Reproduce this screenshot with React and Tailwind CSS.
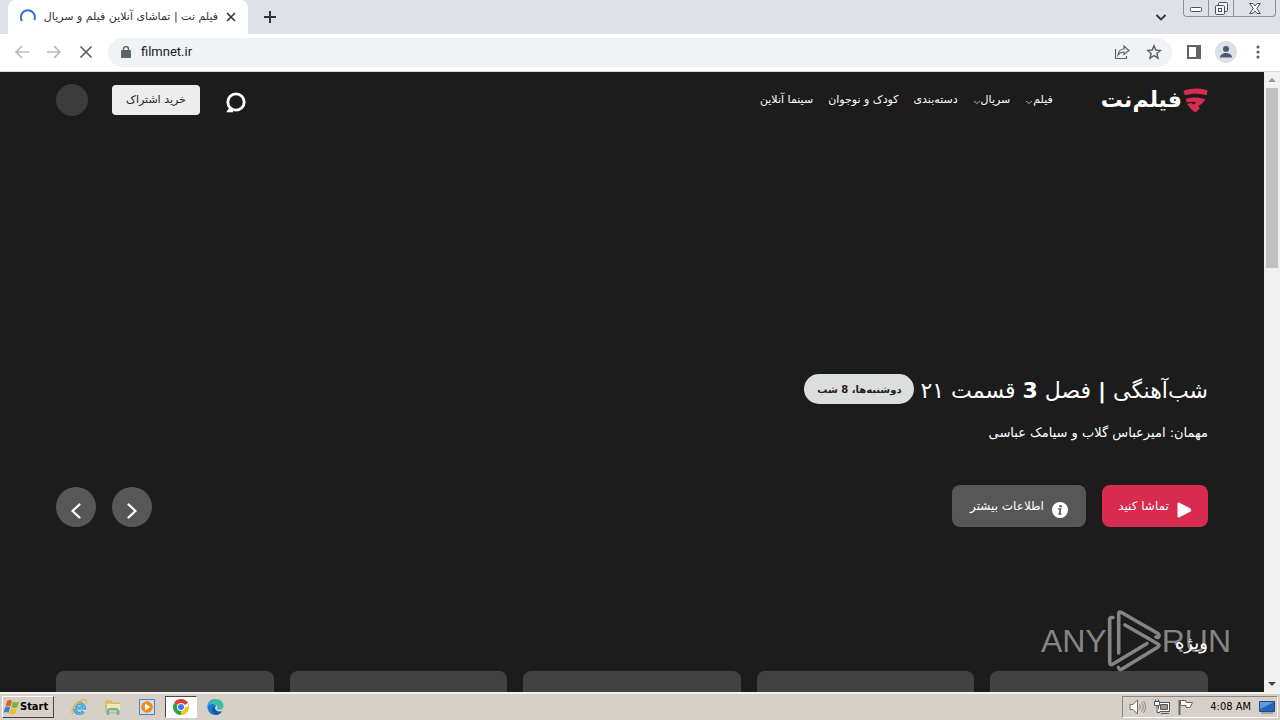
import React from "react";

const fa = "font-['DejaVu_Sans',sans-serif]";

function TabStrip() {
  return (
    <div className="flex h-[34px] shrink-0 bg-[#dee1e8]">
      <div className="ml-2 flex w-[240px] items-center gap-2 rounded-t-lg bg-white px-3">
        <svg className="size-4 shrink-0" viewBox="0 0 16 16" fill="none" stroke="#2f74cf" strokeWidth="2">
          <path d="M2 12A7 7 0 1 1 14.300 11" />
        </svg>
        <span dir="rtl" className={`${fa} min-w-0 flex-1 overflow-hidden text-[11px] whitespace-nowrap text-[#333]`}>
          فیلم نت | تماشای آنلاین فیلم و سریال
        </span>
        <button aria-label="Close tab" className="shrink-0">
          <svg className="size-2.5" viewBox="0 0 10 10" stroke="#333" strokeWidth="1.6"><path d="M1 1l8 8M9 1l-8 8" /></svg>
        </button>
      </div>
      <button aria-label="New tab" className="ml-4 flex items-center">
        <svg className="size-3" viewBox="0 0 12 12" stroke="#333" strokeWidth="2"><path d="M6 0v12M0 6h12" /></svg>
      </button>
      <button aria-label="Search tabs" className="mr-4 ml-auto flex items-center">
        <svg className="size-3" viewBox="0 0 12 12" fill="none" stroke="#333" strokeWidth="1.8"><path d="M1.500 4L6 8.500 10.500 4" /></svg>
      </button>
      <div className="mr-1 flex h-[17px] w-[93px] rounded-b border border-t-0 border-[#8b9099]">
        <button aria-label="Minimize" className="flex w-[25px] items-end justify-center border-r border-[#8b9099] pb-1">
          <svg width="12" height="5" viewBox="0 0 12 5"><rect x=".5" y=".5" width="11" height="4" rx="1" fill="#fff" stroke="#4b505a" /></svg>
        </button>
        <button aria-label="Restore" className="flex w-[25px] items-center justify-center border-r border-[#8b9099]">
          <svg width="13" height="13" viewBox="0 0 13 13" fill="#f4f5f7" stroke="#4b505a"><rect x="3.5" y=".5" width="9" height="9" rx="1" /><rect x=".5" y="3.5" width="9" height="9" rx="1" /><rect x="3.5" y="6.5" width="3" height="3" /></svg>
        </button>
        <button aria-label="Close window" className="flex flex-1 items-center justify-center">
          <svg width="12" height="11" viewBox="0 0 12 11" fill="#fff" stroke="#4b505a"><path d="M.7.5H4L6 3 8 .5h3.300L7.800 5.500l3.500 5H8L6 8l-2 2.500H.7l3.500-5z" /></svg>
        </button>
      </div>
    </div>
  );
}

function Toolbar() {
  return (
    <div className="flex h-[38px] shrink-0 items-center border-b border-[#d5d7dc] bg-white pr-[13px] pb-px pl-[14px]">
      <button aria-label="Back" className="mr-4">
        <svg className="size-4" viewBox="0 0 16 16" fill="none" stroke="#b7b9bc" strokeWidth="1.6"><path d="M15 8H2M8 2L2 8l6 6" /></svg>
      </button>
      <button aria-label="Forward" className="mr-4">
        <svg className="size-4" viewBox="0 0 16 16" fill="none" stroke="#b7b9bc" strokeWidth="1.6"><path d="M1 8h13M8 2l6 6-6 6" /></svg>
      </button>
      <button aria-label="Stop loading" className="mr-[14px]">
        <svg className="size-4" viewBox="0 0 16 16" stroke="#55595e" strokeWidth="1.6"><path d="M2.500 2.500l11 11M13.500 2.500l-11 11" /></svg>
      </button>
      <div className="flex h-[29px] min-w-0 flex-1 items-center rounded-full bg-[#f0f3f6] pr-[10px] pl-[13px]">
        <svg width="10" height="12" viewBox="0 0 10 12"><rect y="4" width="10" height="8" rx="1" fill="#5f6368" /><path d="M2.500 5V3a2.500 2.500 0 0 1 5 0v2" fill="none" stroke="#5f6368" strokeWidth="1.400" /></svg>
        <input aria-label="Address" defaultValue="filmnet.ir" className="ml-[10px] min-w-0 flex-1 bg-transparent font-['Roboto',sans-serif] text-[13px] text-[#202124] outline-none" />
        <button aria-label="Share" className="mr-4">
          <svg className="size-4" viewBox="0 0 16 16" fill="none" stroke="#5f6368" strokeWidth="1.2"><path d="M1.500 5v9.500h11V12M4 11c.5-4 3-6 6-6V2l5 4.500-5 4V8C7.500 8 5.500 9 4 11z" /></svg>
        </button>
        <button aria-label="Bookmark">
          <svg className="size-4" viewBox="0 0 16 16" fill="none" stroke="#5f6368" strokeWidth="1.5"><path d="M8 1.800l1.800 4.300 4.600.4-3.500 3 1.100 4.600L8 11.600l-4 2.500 1.100-4.600-3.500-3 4.600-.4z" /></svg>
        </button>
      </div>
      <button aria-label="Side panel" className="ml-[15px]">
        <svg width="14" height="14" viewBox="0 0 14 14"><rect x="1" y="1" width="12" height="12" fill="none" stroke="#5f6368" strokeWidth="2" /><path d="M9 0h5v14H9z" fill="#5f6368" /></svg>
      </button>
      <button aria-label="Profile" className="ml-[14px]">
        <svg width="22" height="22" viewBox="0 0 22 22"><circle cx="11" cy="11" r="11" fill="#dce1e8" /><circle cx="11" cy="8" r="3" fill="#4c5a76" /><path d="M5 16.500c0-3 3-4.500 6-4.500s6 1.500 6 4.500z" fill="#4c5a76" /></svg>
      </button>
      <button aria-label="Menu" className="ml-[14px]">
        <svg width="16" height="14" viewBox="0 0 16 14" fill="#5f6368"><circle cx="7" cy="2" r="1.600" /><circle cx="7" cy="7" r="1.600" /><circle cx="7" cy="12" r="1.600" /></svg>
      </button>
    </div>
  );
}

const nav = [
  { label: "فیلم", menu: true },
  { label: "سریال", menu: true },
  { label: "دسته‌بندی" },
  { label: "کودک و نوجوان" },
  { label: "سینما آنلاین" },
];

function SiteHeader() {
  return (
    <header className="flex h-14 shrink-0 items-center">
      <a href="#home" className="flex h-8 items-center gap-px">
        <svg width="25" height="25" viewBox="0 0 25 25" fill="#d92b50">
          <path d="M.4 2.700C8-.2 17-.3 24.700 2.400L23.600 7.200C16 5 8 5.200 1.800 7.300z" />
          <path d="M2.800 10.800C9 9 16 9.200 22.400 11.200C20.500 14.500 18.500 16.500 15.300 17.800L16.800 20.500L12.500 24.500C8.500 22 6 19 4.200 16L8.500 14.700L10 16.500C11.500 16 12.500 15 13.300 14.200C10 13.500 7.500 13.600 3.800 14.600z" />
        </svg>
        <span className={`${fa} text-[22px] leading-8 font-bold text-white`}>فیلم‌نت</span>
      </a>
      <nav className="mr-12 flex items-center gap-[15px]">
        {nav.map((item) => (
          <a key={item.label} href="#section" className={`${fa} flex items-center text-[11px] font-medium whitespace-nowrap text-white`}>
            {item.label}
            {item.menu && (
              <svg className="mt-1 size-2" viewBox="0 0 8 8" fill="none" stroke="#aaa"><path d="M1 3l3 2.500L7 3" /></svg>
            )}
          </a>
        ))}
      </nav>
      <button aria-label="جستجو" className="mt-1 mr-auto">
        <svg width="21" height="21" viewBox="0 0 21 21" fill="none" stroke="#fff"><circle cx="11" cy="10" r="8.200" strokeWidth="2.800" /><path d="M5.500 16L3.500 19H8" strokeWidth="2.400" /></svg>
      </button>
      <button className={`${fa} mr-[25px] h-[30px] w-[88px] rounded bg-[#ededed] text-[11px] whitespace-nowrap text-[#222]`}>خرید اشتراک</button>
      <button aria-label="حساب کاربری" className="mr-6 size-8 rounded-full bg-[#3c3c3c]" />
    </header>
  );
}

function Hero() {
  return (
    <section className={`${fa} text-white`}>
      <div className="flex items-center gap-1.5">
        <h1 className="text-[22px] leading-9 font-normal whitespace-nowrap">
          شب‌آهنگی <b>|</b> فصل <b>3</b> قسمت ۲۱
        </h1>
        <span className="mb-1 flex h-[30px] w-[110px] items-center justify-center rounded-full bg-[#dbdedc] text-[10px] font-bold whitespace-nowrap text-[#222]">دوشنبه‌ها، 8 شب</span>
      </div>
      <p className="mt-3 text-[13px] leading-6 whitespace-nowrap">مهمان: امیرعباس گلاب و سیامک عباسی</p>
      <div className="mt-10 flex items-end">
        <button className="flex h-[42px] w-[106px] items-center justify-center gap-2 rounded-lg bg-[#d92b50] text-[12px] whitespace-nowrap">
          <svg className="mt-2" width="15" height="16" viewBox="0 0 15 16" fill="#fff"><path d="M.5 2Q.5 0 2.500.8l11 5.700q1.500 1.500 0 3l-11 5.700Q.5 16 .5 14z" /></svg>
          تماشا کنید
        </button>
        <button className="mr-4 flex h-[42px] w-[134px] items-center justify-center gap-2 rounded-lg bg-[#575757] text-[12px] whitespace-nowrap">
          <svg className="mt-2" width="16" height="16" viewBox="0 0 16 16"><circle cx="8" cy="8" r="8" fill="#fff" /><circle cx="8.600" cy="4.300" r="1.300" fill="#555" /><path d="M6.300 7h2.200l-1 5h1.800M6.300 12h1.500" fill="none" stroke="#555" strokeWidth="1.600" /></svg>
          اطلاعات بیشتر
        </button>
        <div className="mr-auto flex gap-4">
          <button aria-label="قبلی" className="flex size-10 items-center justify-center rounded-full bg-[#575757]">
            <svg className="mt-2" width="10" height="16" viewBox="0 0 10 16" fill="none" stroke="#fff" strokeWidth="2.200" strokeLinecap="round"><path d="M1.500 1.500L8.500 8l-7 6.500" /></svg>
          </button>
          <button aria-label="بعدی" className="flex size-10 items-center justify-center rounded-full bg-[#575757]">
            <svg className="mt-2" width="10" height="16" viewBox="0 0 10 16" fill="none" stroke="#fff" strokeWidth="2.200" strokeLinecap="round"><path d="M8.500 1.500L1.500 8l7 6.500" /></svg>
          </button>
        </div>
      </div>
    </section>
  );
}

function Featured() {
  return (
    <section className="pt-[100px]">
      <h2 className={`${fa} relative z-10 text-[18px] leading-8 text-white`}>ویژه</h2>
      <div className="mt-3 grid grid-cols-5 gap-4">
        {[1, 2, 3, 4, 5].map((n) => (
          <div key={n} className="h-32 rounded-lg bg-[#424242]" />
        ))}
      </div>
    </section>
  );
}

function Watermark() {
  return (
    <div dir="ltr" className="pointer-events-none absolute right-[33px] bottom-5 flex items-center font-['Liberation_Sans',sans-serif] text-[32px] leading-none text-[#858585]">
      <span>ANY</span>
      <svg width="55" height="62" viewBox="0 0 55 62" fill="none" stroke="#858585" strokeWidth="3.6" strokeLinejoin="round" strokeLinecap="round">
        <path d="M6 7.500H4.500Q2.700 7.500 2.700 9.500V52Q2.700 56 6 54L40 33.500" />
        <path d="M11.700 43V4Q11.700 1 14.500 2.500L51 23.500Q53 25.500 51 27.500L49 27" />
        <path d="M18 15L51 34Q53 35.500 51 37L15 59Q12.500 60.500 11.500 57.500" />
      </svg>
      <span>RUN</span>
    </div>
  );
}

function ScrollBar() {
  return (
    <div className="flex w-4 shrink-0 flex-col items-center bg-[#f1f1f1]">
      <svg className="my-1 size-2 shrink-0" viewBox="0 0 8 8" fill="#999"><path d="M0 6l4-4 4 4z" /></svg>
      <div className="h-[180px] w-3 bg-[#c1c1c1]" />
      <svg className="mt-auto mb-1 size-2 shrink-0" viewBox="0 0 8 8" fill="#444"><path d="M0 2l4 4 4-4z" /></svg>
    </div>
  );
}

function Explorer() {
  return (
    <svg width="17" height="18" viewBox="0 0 17 18" fill="none">
      <path d="M4 10h9.500a5 5 0 1 0-1 3.500" stroke="#2e9bd8" strokeWidth="3" />
      <path d="M4 10h9.500a5 5 0 1 0-1 3.500" stroke="#7ccdf3" strokeWidth="1" />
      <path d="M2 16C-1 14 4 4 12 2c4-1 4 1 3 4" stroke="#e5b934" strokeWidth="1.500" />
    </svg>
  );
}

function Folder() {
  return (
    <svg width="16" height="17" viewBox="0 0 16 17">
      <path d="M1 2h5l1 2h7v10H1z" fill="#e8c865" stroke="#c8a544" strokeWidth=".7" />
      <path d="M2 5h13v6H2z" fill="#f8e9a8" />
      <path d="M3 16v-4q0-2 2-2h6q2 0 2 2v4" fill="none" stroke="#55b4dc" strokeWidth="2.200" />
    </svg>
  );
}

function MediaPlayer() {
  return (
    <svg width="16" height="16" viewBox="0 0 16 16">
      <path d="M.5.5h15v15H.5z" fill="#cfe0f0" stroke="#4f83b8" />
      <circle cx="8" cy="8" r="5.800" fill="#f58a12" />
      <path d="M6 4.500L11.500 8 6 11.500z" fill="#fff" />
    </svg>
  );
}

function Chrome() {
  return (
    <svg width="16" height="16" viewBox="0 0 16 16">
      <path d="M8 8L1.070 4A8 8 0 0 1 14.930 4z" fill="#e23c2e" />
      <path d="M8 8h6.930V4A8 8 0 0 1 8 16z" fill="#fbc116" />
      <path d="M8 8v8A8 8 0 0 1 1.070 4z" fill="#2da14c" />
      <circle cx="8" cy="8" r="4" fill="#fff" />
      <circle cx="8" cy="8" r="3" fill="#3b7ded" />
    </svg>
  );
}

function Edge() {
  return (
    <svg width="17" height="16" viewBox="0 0 17 16">
      <path d="M.5 8C.5 3 4 0 8.500 0c5 0 8 3.300 8 6.800 0 3-2.500 4.200-5 4-1.500-.1-1.800-.8-1.200-1.600C11 7.500 9.500 5 6.500 5 3.500 5 1 6.500.5 8z" fill="#39bfa9" />
      <path d="M.5 8C.5 3 4 .2 8 .2 4 2 1.500 4 .5 8z" fill="#2c9bd8" />
      <path d="M.5 8C1 5.500 4 4.500 6.500 5 9.500 5.500 9.500 7.500 8 8.300c-1 2 1.500 5 6.800 4.200-1.500 2.300-3.800 3.500-6.300 3.500C4 16 .5 12.500.5 8z" fill="#1978cf" />
      <path d="M5.500 7.800C4 11 6 15 9.500 15.900c2.500-.3 4.200-1.500 5.300-3.400-4 .8-6.800-.9-7-4z" fill="#1159a8" />
    </svg>
  );
}

function Tray() {
  return (
    <div className="mr-0.5 ml-auto flex h-[22px] items-center border border-t-[#8b867e] border-r-white border-b-white border-l-[#8b867e] pr-0.5 pl-1.5">
      <svg className="mr-2" width="17" height="16" viewBox="0 0 17 16" fill="#fff" stroke="#6d6d6d"><path d="M1 5.500h3L8.500 1v14L4 10.500H1z" /><path d="M10.500 5.500q2 2.500 0 5M12.500 3.500q3.500 4.500 0 9M14.500 2q4 6 0 12" fill="none" stroke="#888" /></svg>
      <svg className="mr-2" width="16" height="16" viewBox="0 0 16 16" fill="#fff" stroke="#555"><path d="M4.500 3.500h11v9h-11zM7 14.500h8" /><path d="M6.500 5.500h7v5h-7z" fill="#999" /><path d="M.5 2.500h5v4h-5zM1.500.5v2M4.500.5v2M3 6.500v7h3" /></svg>
      <svg className="mr-4" width="16" height="16" viewBox="0 0 16 16" fill="#fff" stroke="#666"><path d="M1.500 1v15" strokeWidth="2" /><path d="M2.500 1.500H8v2h6.500L12 8.500H8v-2H2.500z" /></svg>
      <time className="mr-2 font-['DejaVu_Sans_Condensed','Liberation_Sans',sans-serif] text-[11px] whitespace-nowrap">4:08 AM</time>
      <svg width="16" height="14" viewBox="0 0 16 14"><path d="M.5 1.500h15v10H.5z" fill="#2766c0" stroke="#234a82" /><path d="M1 2h14L1 9z" fill="#5d9be6" /><path d="M2 13h12" stroke="#777" /></svg>
    </div>
  );
}

function Taskbar() {
  return (
    <footer className="flex h-7 shrink-0 items-center border-t-2 border-[#f4f2ee] bg-[#d6d0c8] pl-0.5 text-black">
      <button className="flex h-[22px] w-[52px] items-center border border-t-white border-r-[#444] border-b-[#444] border-l-white text-[11px] font-bold">
        <svg className="shrink-0" width="17" height="16" viewBox="0 0 17 16"><path d="M4 2q3-2 5 0L7.500 7.500Q5 6 2.500 7.500z" fill="#e85d24" /><path d="M10 2.500q3 2 6 0L14.500 8q-3 2-6 0z" fill="#72b83b" /><path d="M2 8.500q3-2 5 0L5.500 14Q3 12 .5 14z" fill="#3c82d0" /><path d="M8 9q3 2 6 0l-1.500 5.500q-3 2-6 0z" fill="#f5bd25" /></svg>
        <span className="font-['DejaVu_Sans_Condensed','DejaVu_Sans',sans-serif]">Start</span>
      </button>
      <button aria-label="Internet Explorer" className="ml-[17px]"><Explorer /></button>
      <button aria-label="File Explorer" className="ml-[17px]"><Folder /></button>
      <button aria-label="Media Player" className="ml-[18px]"><MediaPlayer /></button>
      <button aria-label="Google Chrome" className="ml-[10px] flex h-[22px] w-8 items-center justify-center border border-t-[#444] border-r-white border-b-white border-l-[#444] bg-white"><Chrome /></button>
      <button aria-label="Microsoft Edge" className="ml-[10px]"><Edge /></button>
      <Tray />
    </footer>
  );
}

export default function App() {
  return (
    <div className="flex h-screen flex-col overflow-hidden">
      <TabStrip />
      <Toolbar />
      <div className="flex min-h-0 flex-1">
        <main dir="rtl" className="relative flex min-w-0 flex-1 flex-col overflow-hidden bg-[#1c1c1c] px-14">
          <SiteHeader />
          <div className="h-[245px] shrink-0" />
          <Hero />
          <Featured />
          <Watermark />
        </main>
        <ScrollBar />
      </div>
      <Taskbar />
    </div>
  );
}
